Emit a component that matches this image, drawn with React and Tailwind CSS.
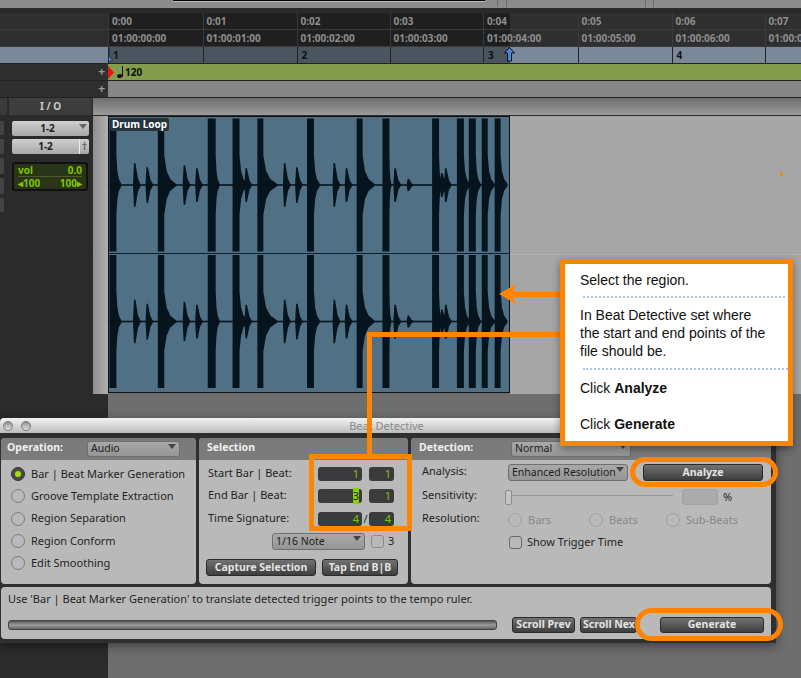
const uiFont = "font-['Noto_Sans',sans-serif]";

const seconds = [
  { w: 94.5, time: "0:00", code: "01:00:00:00", bar: "1" },
  { w: 94, time: "0:01", code: "01:00:01:00" },
  { w: 93, time: "0:02", code: "01:00:02:00", bar: "2" },
  { w: 93.5, time: "0:03", code: "01:00:03:00" },
  { w: 94.5, time: "0:04", code: "01:00:04:00", bar: "3" },
  { w: 94, time: "0:05", code: "01:00:05:00" },
  { w: 93, time: "0:06", code: "01:00:06:00", bar: "4" },
  { w: 60, time: "0:07", code: "01:00:07:00" },
];

const bigHits = [
  [0, 7, 5], [48.7, 6.5, 12], [99, 8, 4], [124, 7, 8], [149, 6, 14], [199, 7, 6],
  [249, 6, 12], [275, 7, 2], [325, 7, 3], [350, 7, 6], [362, 7, 5], [375, 6, 7], [388, 6, 7],
];

const smallHits = [
  [23.7, 22], [36.3, 18], [73.7, 20], [86.3, 17], [136, 17], [174.7, 22], [187, 18],
  [224.7, 22], [237, 17], [286, 17], [299.3, 6], [333, 12], [337, 17],
];

function channelPath(cy) {
  const H = 67;
  let d = "";
  bigHits.forEach(([x, w, tail]) => {
    const r = x + w;
    d += `M${x} ${cy - H}L${r} ${cy - H}L${r} ${cy - 30}L${r + tail * 0.2} ${cy - 14}L${r + tail * 0.5} ${cy - 6}L${r + tail} ${cy - 1}`;
    d += `L${r + tail} ${cy + 1}L${r + tail * 0.5} ${cy + 6}L${r + tail * 0.2} ${cy + 14}L${r} ${cy + 30}L${r} ${cy + H}L${x} ${cy + H}Z`;
  });
  smallHits.forEach(([x, h]) => {
    d += `M${x} ${cy}L${x + 1} ${cy - h}L${x + 2.5} ${cy - h}L${x + 5} ${cy - h * 0.3}L${x + 8} ${cy}L${x + 5} ${cy + h * 0.3}L${x + 2.5} ${cy + h}L${x + 1} ${cy + h}Z`;
  });
  return d;
}

function Waveform() {
  return (
    <svg viewBox="0 0 402 277" className="block w-full h-full">
      <path d={channelPath(68.5)} fill="#06141d" />
      <path d={channelPath(206)} fill="#06141d" />
      <rect x="0" y="67.7" width="400" height="1.6" fill="#06141d" />
      <rect x="0" y="205.2" width="400" height="1.6" fill="#06141d" />
      <rect x="0" y="137" width="402" height="1" fill="#0b2230" />
    </svg>
  );
}

function TimeRow({ field }) {
  return (
    <div className="flex h-[17px] border-b border-[#3a3a3a] bg-[linear-gradient(90deg,#1f1f1f_402px,#2f2f2f_402px)]">
      {seconds.map((s) => (
        <div
          key={s.time}
          style={{ width: s.w }}
          className="shrink-0 border-l border-[#3a3a3a] pl-[3px] text-[10px] leading-[16px] font-bold text-[#8e8e8e]"
        >
          {s[field]}
        </div>
      ))}
    </div>
  );
}

function Dropdown({ children, className }) {
  return (
    <div
      className={`relative flex items-center rounded-[3px] border border-[#6f6f6f] bg-[linear-gradient(#a9a9a9,#959595)] pl-[3px] text-[10.5px] text-[#1c1c1c] ${className}`}
    >
      {children}
      <span className="absolute right-[3px] top-[2px] h-0 w-0 border-x-[4px] border-t-[5px] border-x-transparent border-t-[#444]" />
    </div>
  );
}

function DarkButton({ children, className }) {
  return (
    <div
      className={`flex items-center justify-center whitespace-nowrap rounded-[3px] border border-[#2a2a2a] bg-[linear-gradient(#727272,#3e3e3e)] text-[10.5px] font-bold text-[#e4e4e4] ${className}`}
    >
      {children}
    </div>
  );
}

function Radio({ on, dim }) {
  return (
    <span
      className={`flex h-[14px] w-[14px] shrink-0 items-center justify-center rounded-full border ${
        on ? "border-[#333] bg-[#4a4a4a]" : dim ? "border-[#a0a0a0]" : "border-[#7c7c7c]"
      }`}
    >
      {on && <span className="h-[6px] w-[6px] rounded-full bg-[#a8e000]" />}
    </span>
  );
}

function Field({ value, selected, className }) {
  return (
    <div
      className={`flex items-center justify-end rounded-[3px] bg-[#3b3b3d] pr-[3px] text-[11px] text-[#7fc400] ${className}`}
    >
      <span className={selected ? "bg-[#88d000] text-[#222]" : ""}>{value}</span>
    </div>
  );
}

function Panel({ title, control, titleW, width, children }) {
  return (
    <div style={{ width }} className="h-[146px] shrink-0 overflow-hidden rounded-[4px] bg-[#b9b9b9]">
      <div className="flex h-[22px] items-center bg-[#7b7b7b]">
        <span style={{ width: titleW }} className="shrink-0 pb-[2px] pl-[6px] text-[10.5px] font-bold text-[#f0f0f0]">
          {title}
        </span>
        {control}
      </div>
      {children}
    </div>
  );
}

function OperationPanel() {
  const ops = [
    "Bar | Beat Marker Generation",
    "Groove Template Extraction",
    "Region Separation",
    "Region Conform",
    "Edit Smoothing",
  ];
  return (
    <Panel
      width={195}
      titleW={86}
      title="Operation:"
      control={<Dropdown className="h-[16px] w-[93px]">Audio</Dropdown>}
    >
      <div className="pl-[10px] pt-[3px]">
        {ops.map((op, i) => (
          <div key={op} className="flex h-[22.25px] items-center gap-[6px] text-[11px] text-[#1f1f1f]">
            <Radio on={i === 0} />
            {op}
          </div>
        ))}
      </div>
    </Panel>
  );
}

function SelectionPanel() {
  return (
    <Panel width={209} titleW={120} title={<span className="pl-[2px]">Selection</span>}>
      <div className="pl-[9px] pt-[7px] text-[11px] text-[#1f1f1f]">
        <div className="flex h-[14px] items-center">
          <span className="w-[110px] pb-[2px]">Start Bar | Beat:</span>
          <Field value="1" className="h-[14px] w-[44px]" />
          <Field value="1" className="ml-[7px] h-[14px] w-[25px]" />
        </div>
        <div className="mt-[8px] flex h-[14px] items-center">
          <span className="w-[110px] pb-[2px]">End Bar | Beat:</span>
          <Field value="3" selected className="h-[14px] w-[44px]" />
          <Field value="1" className="ml-[7px] h-[14px] w-[25px]" />
        </div>
        <div className="mt-[9px] flex h-[14px] items-center">
          <span className="w-[110px] pb-[2px]">Time Signature:</span>
          <Field value="4" className="h-[14px] w-[44px]" />
          <span className="w-[7px] text-center">/</span>
          <Field value="4" className="h-[14px] w-[25px]" />
        </div>
      </div>
      <div className="mt-[7px] flex items-center pl-[73px] text-[11px] text-[#1f1f1f]">
        <Dropdown className="h-[17px] w-[93px]">1/16 Note</Dropdown>
        <span className="ml-[6px] h-[13px] w-[13px] rounded-[3px] border border-[#8a8a8a]" />
        <span className="ml-[4px]">3</span>
      </div>
      <div className="mt-[9px] flex gap-[6px] pl-[7px]">
        <DarkButton className="h-[17px] w-[110px]">Capture Selection</DarkButton>
        <DarkButton className="h-[17px] w-[76px]">Tap End B|B</DarkButton>
      </div>
    </Panel>
  );
}

function DetectionPanel() {
  return (
    <Panel
      width={360}
      titleW={100}
      title={<span className="pl-[2px]">Detection:</span>}
      control={<Dropdown className="h-[16px] w-[120px]">Normal</Dropdown>}
    >
      <div className="pl-[11px] pt-[4px] text-[11px] text-[#1f1f1f]">
        <div className="flex h-[17px] items-start">
          <span className="w-[86px] leading-[14px]">Analysis:</span>
          <Dropdown className="h-[17px] w-[120px]">Enhanced Resolution</Dropdown>
          <DarkButton className="ml-[15px] h-[17px] w-[120px]">Analyze</DarkButton>
        </div>
        <div className="mt-[8px] flex h-[16px] items-center">
          <span className="w-[83px] self-start leading-[11px]">Sensitivity:</span>
          <div className="relative h-[16px] w-[168px]">
            <div className="absolute left-0 right-0 top-[6px] h-[1px] bg-[#9a9a9a]" />
            <div className="absolute left-0 top-[1px] h-[15px] w-[7px] rounded-[2px] border border-[#8d8d8d] bg-[#c4c4c4]" />
          </div>
          <span className="ml-[9px] h-[16px] w-[36px] rounded-[3px] border border-[#a2a2a2] bg-[#ababab]" />
          <span className="ml-[5px]">%</span>
        </div>
        <div className="mt-[5px] flex h-[18px] items-start text-[#888]">
          <span className="w-[86px] leading-[16px] text-[#1f1f1f]">Resolution:</span>
          <div className="flex w-[81px] items-center gap-[6px] pt-[2px]"><Radio dim />Bars</div>
          <div className="flex w-[77px] items-center gap-[6px] pt-[2px]"><Radio dim />Beats</div>
          <div className="flex items-center gap-[6px] pt-[2px]"><Radio dim />Sub-Beats</div>
        </div>
        <div className="mt-[6px] flex items-center gap-[5px] pl-[87px]">
          <span className="h-[13px] w-[13px] rounded-[3px] border border-[#6a6a6a]" />
          Show Trigger Time
        </div>
      </div>
    </Panel>
  );
}

function BeatDetective() {
  return (
    <div className={`absolute left-0 top-[418px] h-[225px] w-[776px] bg-[#2f2f2f] shadow-[0_3px_10px_rgba(0,0,0,0.45)] ${uiFont}`}>
      <div className="relative flex h-[15px] items-center gap-[8px] rounded-t-[4px] bg-[linear-gradient(#f2f2f2,#bdbdbd)] pl-[3px]">
        <span className="h-[10px] w-[10px] rounded-full border border-[#777] bg-[linear-gradient(#8f8f8f,#e4e4e4)]" />
        <span className="h-[10px] w-[10px] rounded-full border border-[#777] bg-[linear-gradient(#8f8f8f,#e4e4e4)]" />
        <span className="absolute left-0 right-[3px] top-0 text-center text-[11px] leading-[15px] text-[#8a8a8a]">
          Beat Detective
        </span>
      </div>
      <div className="flex gap-[3px] pl-[1px] pt-[5px]">
        <OperationPanel />
        <SelectionPanel />
        <DetectionPanel />
      </div>
      <div className="ml-[1px] mt-[3px] h-[52px] w-[770px] rounded-[4px] bg-[#b9b9b9] pl-[7px] pt-[4px] text-[11px] text-[#1f1f1f]">
        <div className="h-[16px] leading-[16px]">
          Use &apos;Bar | Beat Marker Generation&apos; to translate detected trigger points to the tempo ruler.
        </div>
        <div className="mt-[10px] flex items-center">
          <div className="h-[10px] w-[489px] rounded-[3px] border border-[#444] bg-[linear-gradient(#555,#9c9c9c,#666)]" />
          <DarkButton className="ml-[15px] h-[16px] w-[63px]">Scroll Prev</DarkButton>
          <DarkButton className="ml-[5px] h-[16px] w-[57px] justify-start pl-[2px]">Scroll Nex</DarkButton>
          <DarkButton className="ml-[23px] h-[16px] w-[104px]">Generate</DarkButton>
        </div>
      </div>
    </div>
  );
}

function Annotations() {
  return (
    <>
      {/* orange call-outs over the window */}
      <div className="absolute left-[309px] top-[454px] h-[77px] w-[103px] border-[5px] border-[#ff8400]" />
      <div className="absolute left-[367px] top-[332px] h-[123px] w-[5px] bg-[#ff8400]" />
      <div className="absolute left-[367px] top-[332px] h-[5px] w-[194px] bg-[#ff8400]" />
      <div className="absolute left-[630px] top-[457px] h-[30px] w-[148px] rounded-full border-[5px] border-[#ff8400]" />
      <div className="absolute left-[635px] top-[608px] h-[33px] w-[148px] rounded-full border-[5px] border-[#ff8400]" />
      <svg viewBox="0 0 62 20" className="absolute left-[499px] top-[284px] h-[20px] w-[62px]">
        <path d="M0 10L17 0L14 8H62V13H14L17 20Z" fill="#ff8400" />
      </svg>
      <div className="absolute left-[560px] top-[259px] h-[187px] w-[233px] border-[5px] border-[#ff8400] bg-white pl-[15px] pt-[7px] font-['Liberation_Sans',sans-serif] text-[14px] leading-[18px] text-[#111] shadow-[0_3px_8px_rgba(0,0,0,0.4)]">
        <p>Select the region.</p>
        <div className="ml-[3px] mr-[3px] mt-[7px] h-[2px] border-t-[2px] border-dotted border-[#a9c4f5]" />
        <p className="mt-[8px] w-[192px]">In Beat Detective set where the start and end points of the file should be.</p>
        <div className="ml-[3px] mt-[8px] h-[2px] border-t-[2px] border-dotted border-[#a9c4f5]" />
        <p className="mt-[9px]">Click <b>Analyze</b></p>
        <p className="mt-[18px]">Click <b>Generate</b></p>
      </div>
    </>
  );
}

function RulerLabel({ children }) {
  return <div className="h-[17px] w-[108px] shrink-0 border-b border-[#3a3a3a] bg-[#2f2f2f]">{children}</div>;
}

function Plus() {
  return <div className="pr-[3px] text-right text-[12px] font-bold leading-[16px] text-[#9a9a9a]">+</div>;
}

function Timeline() {
  return (
    <div className={uiFont}>
      <div className="flex h-[8px] bg-[#8b8b8b]">
        <div className="ml-[173px] h-[2px] w-[312px] border-b border-[#bbb] bg-black" />
        <div className="ml-[12px] h-[7px] w-[10px] border-x border-[#6a6a6a]" />
        <div className="ml-[138px] h-[7px] w-[9px] border-x border-[#6a6a6a]" />
      </div>
      <div className="h-[5px] bg-[#2a2a2a]" />
      <div className="flex">
        <RulerLabel />
        <TimeRow field="time" />
      </div>
      <div className="flex">
        <RulerLabel />
        <TimeRow field="code" />
      </div>
      <div className="flex">
        <div className="h-[17px] w-[108px] shrink-0 border-b border-[#222] bg-[#7a8899]" />
        <div className="relative flex h-[17px] border-b border-[#222] bg-[linear-gradient(90deg,#4a5560_402px,#7a8899_402px)]">
          {seconds.map((s) => (
            <div
              key={s.time}
              style={{ width: s.w }}
              className="shrink-0 border-l border-[#222] pl-[4px] text-[10px] font-bold leading-[16px] text-[#111]"
            >
              {s.bar}
            </div>
          ))}
          <svg viewBox="0 0 7 15" className="absolute left-0 top-[1px] h-[15px] w-[7px]">
            <path d="M0.5 0.5V15L4.5 11L1.5 9V0.5Z" fill="#4a86e0" stroke="#111" strokeWidth="0.6" />
          </svg>
          <svg viewBox="0 0 11 15" className="absolute left-[396px] top-[0px] h-[15px] w-[11px]">
            <path d="M5.5 0.5L10.5 6H7.5V14H3.5V6H0.5Z" fill="#4a86e0" stroke="#0b0b0b" />
          </svg>
        </div>
      </div>
      <div className="flex">
        <div className="h-[17px] w-[108px] shrink-0 border-b border-[#222] bg-[#2f2f2f]"><Plus /></div>
        <div className="flex h-[17px] flex-1 items-center gap-[2px] border-b border-[#222] bg-[#839c4d] text-[10px] font-bold text-[#111]">
          <svg viewBox="0 0 6 13" className="h-[13px] w-[6px]">
            <path d="M0 0L6 6.5L0 13Z" fill="#f01010" />
          </svg>
          <span className="flex items-center gap-[2px]">
            <svg viewBox="0 0 6 12" className="ml-[1px] h-[12px] w-[6px]">
              <path d="M5 0H6V9.5C6 11 4.5 12 2.5 12C1 12 0 11.2 0 10.2C0 9 1.5 8 3 8C4 8 4.6 8.2 5 8.5Z" fill="#111" />
            </svg>
            120
          </span>
        </div>
      </div>
      <div className="flex">
        <div className="h-[17px] w-[108px] shrink-0 border-b border-[#222] bg-[#2f2f2f]"><Plus /></div>
        <div className="h-[17px] flex-1 border-b border-[#222] bg-[#868686]" />
      </div>
      {/* edit window header */}
      <div className="flex h-[18px] bg-[#2b2b2b]">
        <div className="h-[17px] w-[7px] bg-[#3a3a3a]" />
        <div className="ml-[2px] flex h-[17px] w-[83px] items-center justify-center bg-[#3d3d3d] text-[10px] font-bold text-[#c8c8c8]">
          I / O
        </div>
        <div className="ml-[1px] h-[17px] flex-1 bg-[linear-gradient(#6c6c6c,#9c9c9c)]" />
      </div>
      <Track />
    </div>
  );
}

function Track() {
  return (
    <div className="flex h-[278px]">
      <div className="w-[93px] shrink-0 bg-[#2b2b2b] pt-[5px]">
        <div className="flex">
          <div className="flex w-[4px] shrink-0 flex-col gap-[4px]">
            <div className="h-[14px] rounded-r-[2px] bg-[#444]" />
            <div className="h-[15px] rounded-r-[2px] bg-[#444]" />
            <div className="h-[16px] rounded-r-[2px] bg-[#444]" />
            <div className="h-[16px] rounded-r-[2px] bg-[#444]" />
            <div className="h-[14px] rounded-r-[2px] bg-[#444]" />
          </div>
          <div className="ml-[8px] w-[77px] text-[10px] font-bold text-[#222]">
            <div className="relative flex h-[15px] items-center justify-center rounded-[2px] bg-[linear-gradient(#cfcfcf,#a8a8a8)] pr-[6px]">
              1-2
              <span className="absolute right-[2px] top-[3px] h-0 w-0 border-x-[4px] border-t-[5px] border-x-transparent border-t-[#666]" />
            </div>
            <div className="mt-[3px] flex h-[15px] items-center rounded-[2px] bg-[linear-gradient(#cfcfcf,#a8a8a8)]">
              <span className="flex-1 text-center">1-2</span>
              <span className="w-[10px] border-l border-[#eee] text-center leading-[15px] text-[#666]">†</span>
            </div>
            <div className="mt-[8px] h-[29px] w-[76px] rounded-[3px] border-[2px] border-[#111] bg-[#2a3418] px-[4px] text-[10px] leading-[12px] text-[#7fc400]">
              <div className="flex justify-between border-b border-[#4a5a2a]">
                <span>vol</span>
                <span>0.0</span>
              </div>
              <div className="flex justify-between">
                <span>◂100</span>
                <span>100▸</span>
              </div>
            </div>
          </div>
        </div>
      </div>
      <div className="w-[15px] shrink-0 bg-[linear-gradient(90deg,#8f8f8f,#b0b0b0)]" />
      <div className="relative h-[277px] w-[402px] shrink-0 border border-[#111] bg-[#4f7085]">
        <Waveform />
        <div className="absolute left-[1px] top-[1px] rounded-[2px] bg-[#26343e] px-[2px] text-[10px] font-bold leading-[13px] text-white">
          Drum Loop
        </div>
      </div>
      <div className="relative flex-1 bg-[#a6a6a6]">
        <div className="absolute left-0 right-0 top-[138px] h-[1px] bg-[#b0b0b0]" />
        <div className="absolute left-[270px] top-[55px] h-0 w-0 border-y-[3px] border-l-[4px] border-y-transparent border-l-[#f08a1c]" />
      </div>
    </div>
  );
}

export default function App() {
  return (
    <div className="relative h-[678px] w-[801px] overflow-hidden bg-[#6e6e6e]">
      <Timeline />
      <div className="h-[285px] w-[108px] bg-[#2b2b2b]" />
      <BeatDetective />
      <Annotations />
    </div>
  );
}
